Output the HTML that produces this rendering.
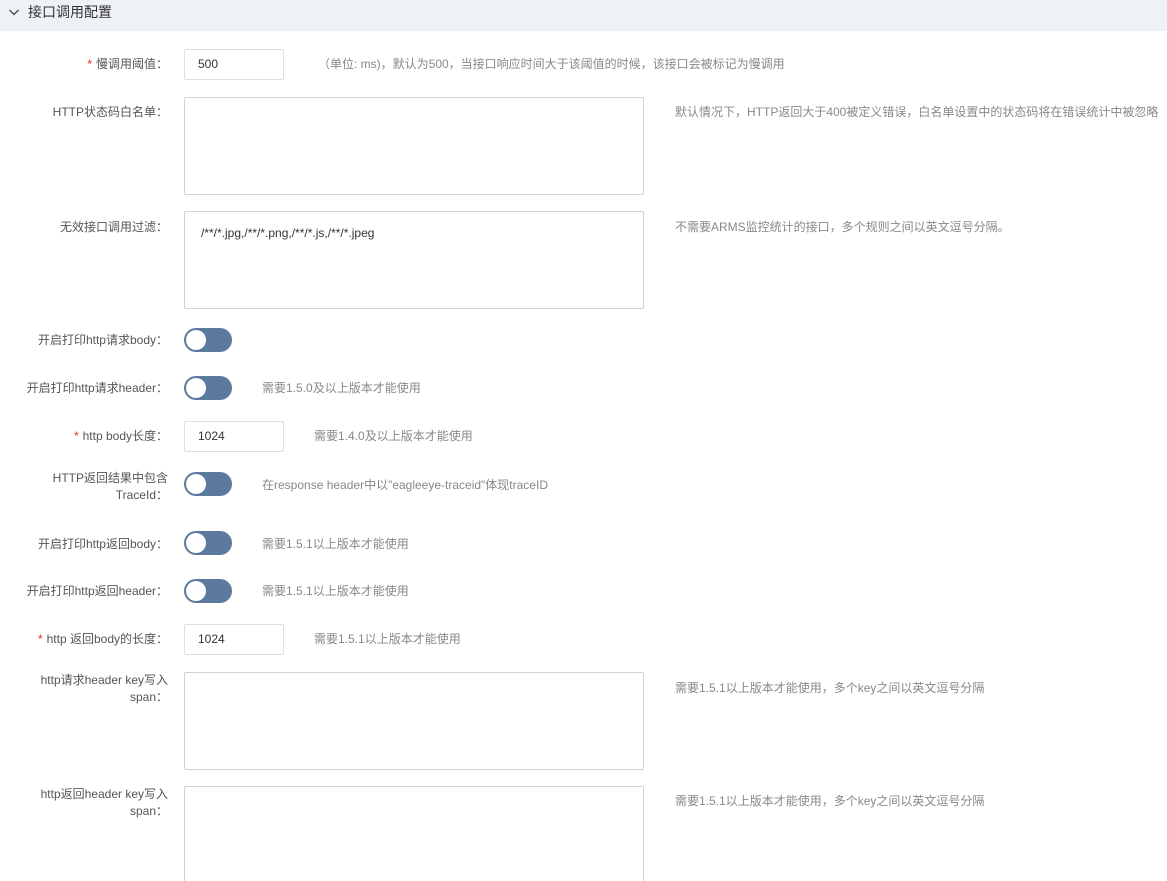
<!DOCTYPE html>
<html><head><meta charset="utf-8"><style>
*{box-sizing:border-box;margin:0;padding:0}
html,body{width:1167px;height:881px;overflow:hidden}
body{background:#fff;font-family:"Liberation Sans","Noto Sans CJK SC",sans-serif;font-size:12px;color:#555;position:relative}
.hd{position:absolute;left:0;top:0;width:1167px;height:31px;background:#eef1f6;}
.hd .t{position:absolute;left:28px;top:3px;font-size:14px;color:#333;line-height:18px}
.hd svg{position:absolute;left:8px;top:6px}
.lb{position:absolute;left:0;width:168px;text-align:right;line-height:17px;color:#555}
.lb .r{color:#e22;margin-right:4px}
.in{position:absolute;left:184px;width:100px;height:31px;border:1px solid #dcdfe6;border-radius:2px;padding-left:13px;line-height:29px;color:#333}
.ta{position:absolute;left:184px;width:460px;height:98px;border:1px solid #d0d3d9;border-radius:2px}
.tg{position:absolute;left:184px;width:48px;height:24px;border-radius:12px;background:#5b7a9d}
.tg:after{content:"";position:absolute;left:2px;top:2px;width:20px;height:20px;border-radius:50%;background:#fff}
.hp{position:absolute;line-height:17px;color:#888}
</style></head><body>
<div class="hd"><svg width="12" height="12" viewBox="0 0 12 12"><path d="M1.5 4 L6 8.5 L10.5 4" stroke="#444" stroke-width="1.3" fill="none"/></svg><div class="t">接口调用配置</div></div>

<div class="lb" style="top:56px"><span class="r">*</span>慢调用阈值：</div>
<div class="in" style="top:49px">500</div>
<div class="hp" style="left:318px;top:56px">（单位: ms)，默认为500，当接口响应时间大于该阈值的时候，该接口会被标记为慢调用</div>

<div class="lb" style="top:104px">HTTP状态码白名单：</div>
<div class="ta" style="top:97px"></div>
<div class="hp" style="left:675px;top:104px">默认情况下，HTTP返回大于400被定义错误，白名单设置中的状态码将在错误统计中被忽略</div>

<div class="lb" style="top:219px">无效接口调用过滤：</div>
<div class="ta" style="top:211px"><div style="position:absolute;left:16px;top:14px;color:#333">/**/*.jpg,/**/*.png,/**/*.js,/**/*.jpeg</div></div>
<div class="hp" style="left:675px;top:219px">不需要ARMS监控统计的接口，多个规则之间以英文逗号分隔。</div>

<div class="lb" style="top:332px">开启打印http请求body：</div>
<div class="tg" style="top:328px"></div>

<div class="lb" style="top:380px">开启打印http请求header：</div>
<div class="tg" style="top:376px"></div>
<div class="hp" style="left:262px;top:380px">需要1.5.0及以上版本才能使用</div>

<div class="lb" style="top:428px"><span class="r">*</span>http body长度：</div>
<div class="in" style="top:421px">1024</div>
<div class="hp" style="left:314px;top:428px">需要1.4.0及以上版本才能使用</div>

<div class="lb" style="top:470px">HTTP返回结果中包含<br>TraceId：</div>
<div class="tg" style="top:472px"></div>
<div class="hp" style="left:262px;top:477px">在response header中以"eagleeye-traceid"体现traceID</div>

<div class="lb" style="top:536px">开启打印http返回body：</div>
<div class="tg" style="top:531px"></div>
<div class="hp" style="left:262px;top:536px">需要1.5.1以上版本才能使用</div>

<div class="lb" style="top:583px">开启打印http返回header：</div>
<div class="tg" style="top:579px"></div>
<div class="hp" style="left:262px;top:583px">需要1.5.1以上版本才能使用</div>

<div class="lb" style="top:631px"><span class="r">*</span>http 返回body的长度：</div>
<div class="in" style="top:624px">1024</div>
<div class="hp" style="left:314px;top:631px">需要1.5.1以上版本才能使用</div>

<div class="lb" style="top:672px">http请求header key写入<br>span：</div>
<div class="ta" style="top:672px"></div>
<div class="hp" style="left:675px;top:680px">需要1.5.1以上版本才能使用，多个key之间以英文逗号分隔</div>

<div class="lb" style="top:786px">http返回header key写入<br>span：</div>
<div class="ta" style="top:786px;height:110px"></div>
<div class="hp" style="left:675px;top:793px">需要1.5.1以上版本才能使用，多个key之间以英文逗号分隔</div>
</body></html>
